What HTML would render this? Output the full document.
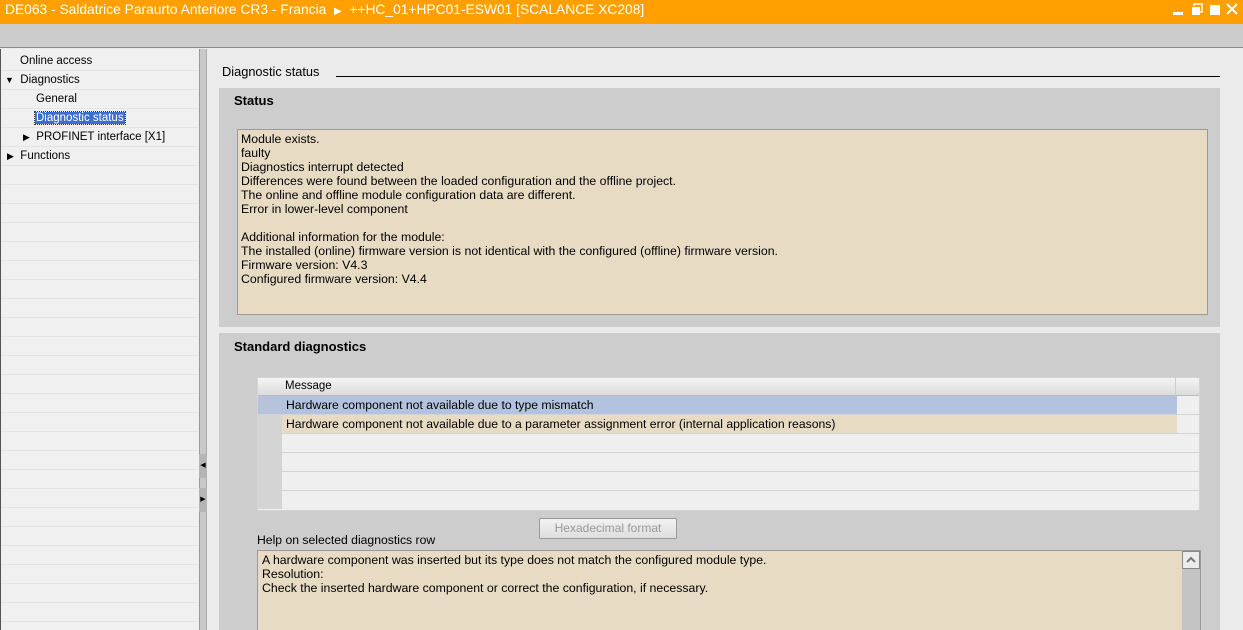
<!DOCTYPE html>
<html style="width:1243px;height:630px;overflow:hidden"><head><meta charset="utf-8"><style>
*{margin:0;padding:0;box-sizing:border-box}
body{width:1243px;height:630px;overflow:hidden;background:#ebebeb;font-family:"Liberation Sans",sans-serif;font-size:12px;color:#000;position:relative}
.a{position:absolute}
.title{left:0;top:0;width:1243px;height:24px;background:#ffa000;color:#fff;font-size:13.8px;line-height:19px;padding-left:5px;white-space:nowrap}
.bar{left:0;top:24px;width:1243px;height:24px;background:#cccccc;border-bottom:1px solid #8c8c8c}
.left{left:0;top:49px;width:199px;height:581px;background:#f0f0f0;border-left:1px solid #555;overflow:hidden}
.row{position:absolute;left:0;width:197px;height:19px;border-bottom:1px solid #e4e4e4;line-height:18px;font-size:11.5px;white-space:nowrap}
.split{left:199px;top:49px;width:8px;height:581px;background:#c9c9c9;border-left:1px solid #999;border-right:1px solid #aaa}
.panel{background:#cdcdcd}
.box{background:#e8dbc4;border:1px solid #9a9a9a;font-size:12.3px;line-height:14px;padding:2px 3px;overflow:hidden}
.h{font-weight:bold;font-size:13px}
.tr{position:absolute;left:0;width:943px;height:19px;border-bottom:1px solid #d4d4d4;line-height:18px;font-size:12.2px;white-space:nowrap}
.tr .g{position:absolute;left:0;top:0;width:24px;height:18px;background:#d4d4d4}
.tr .c{position:absolute;left:24px;top:0;width:895px;height:18px;padding-left:4px}
</style></head><body>
<div class="a title">DE063 - Saldatrice Paraurto Anteriore CR3 - Francia &nbsp;<span style="font-size:10px">▶</span>&nbsp; ++HC_01+HPC01-ESW01 [SCALANCE XC208]</div>
<svg class="a" style="left:1170px;top:3px" width="70" height="12"><rect x="3" y="9" width="10" height="3" fill="#fff"/><rect x="22" y="4" width="8" height="8" fill="#fff"/><path d="M24 3V1h8v8h-2" stroke="#fff" fill="none" stroke-width="1.5"/><rect x="40" y="2" width="10" height="10" fill="#fff"/><path d="M57 1l10 10M67 1L57 11" stroke="#fff" stroke-width="2"/></svg>
<div class="a bar"></div>
<div class="a left">
<div class="row" style="top:3px;padding-left:19px">Online access</div>
<div class="row" style="top:22px;padding-left:4px"><span style="font-size:9px">▼</span>&nbsp; Diagnostics</div>
<div class="row" style="top:41px;padding-left:35px">General</div>
<div class="row" style="top:60px;padding-left:34px"><span style="background:#3a6fcf;color:#fff;outline:1px dotted #333;padding:0 1px">Diagnostic status</span></div>
<div class="row" style="top:79px;padding-left:22px"><span style="font-size:9px">▶</span>&nbsp; PROFINET interface [X1]</div>
<div class="row" style="top:98px;padding-left:6px"><span style="font-size:9px">▶</span>&nbsp; Functions</div>
<div class="row" style="top:117px"></div><div class="row" style="top:136px"></div><div class="row" style="top:155px"></div><div class="row" style="top:174px"></div><div class="row" style="top:193px"></div><div class="row" style="top:212px"></div><div class="row" style="top:231px"></div><div class="row" style="top:250px"></div><div class="row" style="top:269px"></div><div class="row" style="top:288px"></div><div class="row" style="top:307px"></div><div class="row" style="top:326px"></div><div class="row" style="top:345px"></div><div class="row" style="top:364px"></div><div class="row" style="top:383px"></div><div class="row" style="top:402px"></div><div class="row" style="top:421px"></div><div class="row" style="top:440px"></div><div class="row" style="top:459px"></div><div class="row" style="top:478px"></div><div class="row" style="top:497px"></div><div class="row" style="top:516px"></div><div class="row" style="top:535px"></div><div class="row" style="top:554px"></div>
</div>
<div class="a split"></div>
<div class="a" style="left:199px;top:454px;width:8px;height:24px;background:#b5b5b5;font-size:7px;line-height:24px;text-align:center">◀</div>
<div class="a" style="left:199px;top:488px;width:8px;height:24px;background:#b5b5b5;font-size:7px;line-height:24px;text-align:center">▶</div>
<div class="a" style="left:222px;top:64px;font-size:12.8px">Diagnostic status</div>
<div class="a" style="left:336px;top:76px;width:884px;height:1px;background:#000"></div>
<div class="a panel" style="left:219px;top:88px;width:1001px;height:239px"></div>
<div class="a h" style="left:234px;top:93px">Status</div>
<div class="a box" style="left:237px;top:129px;width:971px;height:186px">Module exists.<br>faulty<br>Diagnostics interrupt detected<br>Differences were found between the loaded configuration and the offline project.<br>The online and offline module configuration data are different.<br>Error in lower-level component<br><br>Additional information for the module:<br>The installed (online) firmware version is not identical with the configured (offline) firmware version.<br>Firmware version: V4.3<br>Configured firmware version: V4.4</div>
<div class="a panel" style="left:219px;top:333px;width:1001px;height:297px"></div>
<div class="a h" style="left:234px;top:339px">Standard diagnostics</div>
<div class="a" style="left:257px;top:377px;width:943px;height:134px;background:#efefef;border:1px solid #d4d4d4">
<div style="position:absolute;left:0;top:0;width:941px;height:18px;background:linear-gradient(#f4f4f4,#dcdcdc);border-bottom:1px solid #bbb;font-size:11.5px;line-height:17px;padding-left:27px">Message<div style="position:absolute;left:917px;top:0;width:1px;height:18px;background:#ccc"></div></div>
<div class="tr" style="top:18px"><div class="g" style="background:#b7c3da"></div><div class="c" style="background:#b3c3df">Hardware component not available due to type mismatch</div></div>
<div class="tr" style="top:37px"><div class="g"></div><div class="c" style="background:#e8dbc4">Hardware component not available due to a parameter assignment error (internal application reasons)</div></div>
<div class="tr" style="top:56px"><div class="g"></div></div>
<div class="tr" style="top:75px"><div class="g"></div></div>
<div class="tr" style="top:94px"><div class="g"></div></div>
<div class="tr" style="top:113px;border:0"><div class="g"></div></div>
</div>
<div class="a" style="left:539px;top:518px;width:138px;height:21px;border:1px solid #999;background:linear-gradient(#f2f2f2,#dedede);color:#999;font-size:12px;line-height:19px;text-align:center;border-radius:2px">Hexadecimal format</div>
<div class="a" style="left:257px;top:533px;font-size:12.2px">Help on selected diagnostics row</div>
<div class="a box" style="left:257px;top:550px;width:944px;height:80px;padding-left:4px;padding-top:2px;border-bottom:0">A hardware component was inserted but its type does not match the configured module type.<br>Resolution:<br>Check the inserted hardware component or correct the configuration, if necessary.</div>
<div class="a" style="left:1182px;top:551px;width:18px;height:79px;background:#c4c4c4"></div>
<div class="a" style="left:1182px;top:551px;width:18px;height:18px;background:#ececec;border:1px solid #888"><svg width="16" height="16" style="display:block"><path d="M4 10l4-4 4 4" stroke="#777" stroke-width="2" fill="none"/></svg></div>
</body></html>
